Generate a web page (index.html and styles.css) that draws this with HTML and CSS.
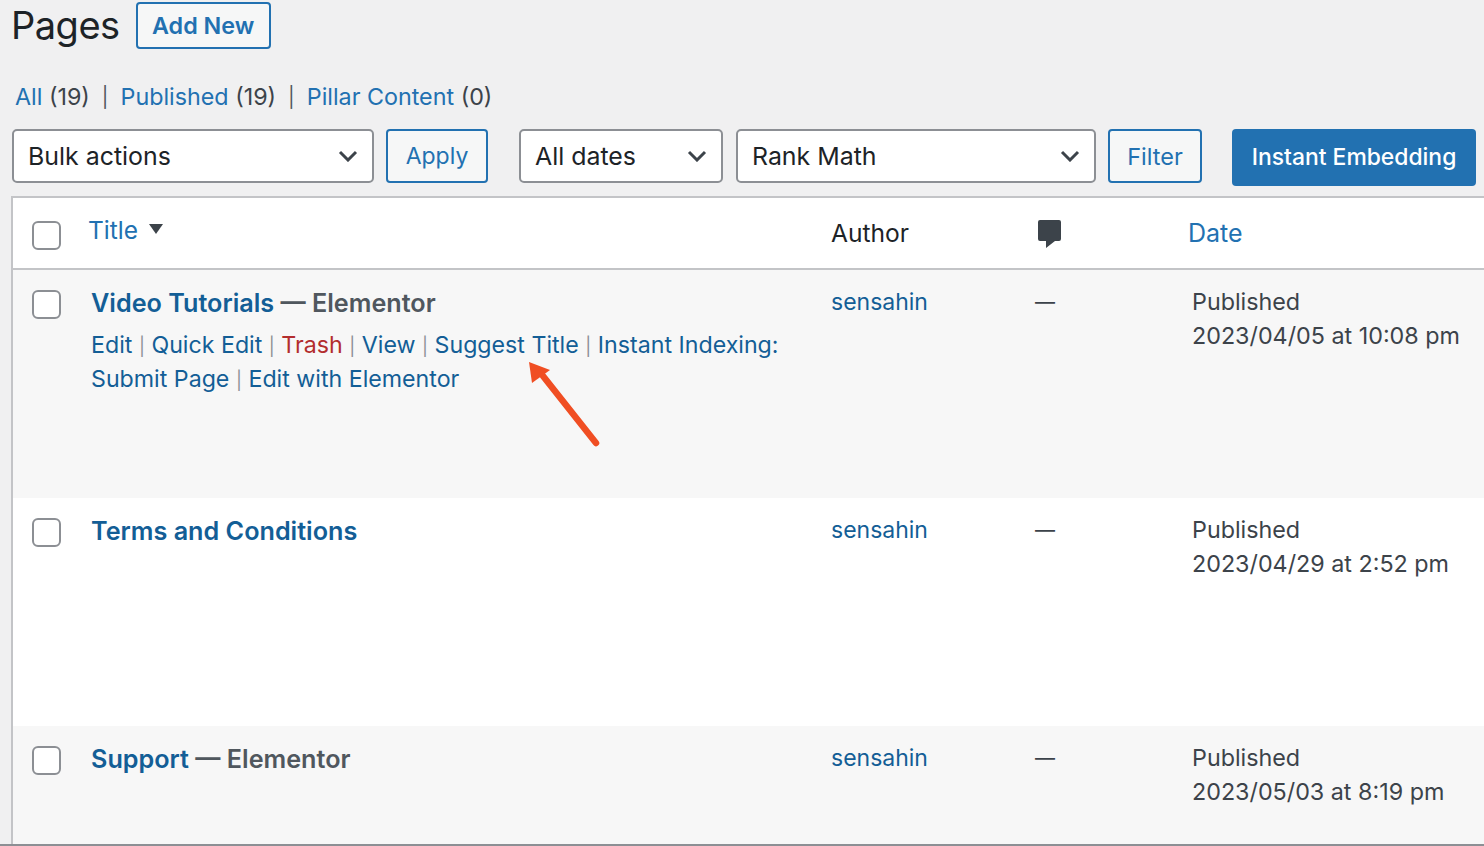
FILE: index.html
```html
<!DOCTYPE html>
<html lang="en">
<head>
  <meta charset="UTF-8" />
  <title>Pages</title>
  <link rel="stylesheet" href="styles.css">
</head>
<body>
  <div class="wrap">
    <div class="page-head">
      <h1>Pages</h1>
      <a class="btn add-new">Add New</a>
    </div>

    <ul class="subsub">
      <li><a>All</a> (19)</li>
      <li class="sep">|</li>
      <li><a>Published</a> (19)</li>
      <li class="sep">|</li>
      <li><a>Pillar Content</a> (0)</li>
    </ul>

    <div class="tablenav">
      <div class="select bulk">Bulk actions
        <svg class="chev" viewBox="0 0 20 12"><path d="M2 2l8 8 8-8"/></svg>
      </div>
      <a class="btn apply">Apply</a>
      <div class="select dates">All dates
        <svg class="chev" viewBox="0 0 20 12"><path d="M2 2l8 8 8-8"/></svg>
      </div>
      <div class="select seo">Rank Math
        <svg class="chev" viewBox="0 0 20 12"><path d="M2 2l8 8 8-8"/></svg>
      </div>
      <a class="btn filter">Filter</a>
      <a class="btn-primary">Instant Embedding</a>
    </div>

    <div class="table">
      <div class="row head">
        <span class="check"></span>
        <div class="col-title"><a>Title</a><span class="sort"></span></div>
        <div class="col-author">Author</div>
        <div class="col-comments">
          <svg class="bubble" viewBox="0 0 23 28"><path d="M2 0h19a2 2 0 0 1 2 2v17a2 2 0 0 1-2 2h-4l-9 7v-7H2a2 2 0 0 1-2-2V2a2 2 0 0 1 2-2z"/></svg>
        </div>
        <div class="col-date"><a>Date</a></div>
      </div>

      <div class="row alt">
        <span class="check"></span>
        <div class="col-title">
          <div class="page-title"><a>Video Tutorials</a> — Elementor</div>
          <div class="actions">
            <a>Edit</a> <i>|</i> <a>Quick Edit</a> <i>|</i> <a class="trash">Trash</a> <i>|</i> <a>View</a> <i>|</i> <a>Suggest Title</a> <i>|</i> <a>Instant Indexing:</a><br>
            <a>Submit Page</a> <i>|</i> <a>Edit with Elementor</a>
          </div>
        </div>
        <div class="col-author"><a>sensahin</a></div>
        <div class="col-comments">—</div>
        <div class="col-date">Published<br>2023/04/05 at 10:08 pm</div>
      </div>

      <div class="row">
        <span class="check"></span>
        <div class="col-title">
          <div class="page-title"><a>Terms and Conditions</a></div>
        </div>
        <div class="col-author"><a>sensahin</a></div>
        <div class="col-comments">—</div>
        <div class="col-date">Published<br>2023/04/29 at 2:52 pm</div>
      </div>

      <div class="row alt">
        <span class="check"></span>
        <div class="col-title">
          <div class="page-title"><a>Support</a> — Elementor</div>
        </div>
        <div class="col-author"><a>sensahin</a></div>
        <div class="col-comments">—</div>
        <div class="col-date">Published<br>2023/05/03 at 8:19 pm</div>
      </div>
    </div>
  </div>

  <!-- annotation arrow drawn over the screenshot -->
  <svg class="arrow" viewBox="0 0 80 95">
    <path class="arrow-line" d="M14 14L67 81"/>
    <path class="arrow-head" d="M0 0L3 21L21 8z"/>
  </svg>
</body>
</html>
```

FILE: styles.css
```css
html, body {
  margin: 0;
  height: 846px;
  overflow: hidden;
}

body {
  position: relative;
  background: #f0f0f1;
  color: #3c434a;
  font-family: Inter, "Noto Sans", sans-serif;
  font-size: 23.3px;
}

a {
  color: #2271b1;
  text-decoration: none;
}

.wrap {
  height: 844px;
  border-bottom: 2px solid #8c8f94;
  overflow: hidden;
}

.page-head {
  display: flex;
  align-items: center;
  gap: 16px;
  height: 50px;
  padding-left: 11px;
}

h1 {
  margin: 0;
  color: #1d2327;
  font-size: 38px;
  font-weight: 400;
  letter-spacing: -0.5px;
}

.btn {
  display: flex;
  align-items: center;
  justify-content: center;
  box-sizing: border-box;
  border: 2px solid #2271b1;
  border-radius: 4px;
  background: #f6f7f7;
}

.add-new {
  width: 135px;
  height: 47px;
  font-size: 23.3px;
  font-weight: 600;
}

.subsub {
  display: flex;
  gap: 12px;
  margin: 29px 0 0;
  padding: 0 0 0 15px;
  list-style: none;
  line-height: 36px;
}

.subsub .sep {
  color: #50575e;
  font-size: 20px;
}

.tablenav {
  display: flex;
  align-items: flex-start;
  margin: 14px 0 10px 12px;
  height: 57px;
}

.select {
  display: flex;
  align-items: center;
  justify-content: space-between;
  box-sizing: border-box;
  height: 54px;
  padding: 0 14px 0 14px;
  border: 2px solid #8c8f94;
  border-radius: 5px;
  background: #fff;
  color: #1d2327;
  font-size: 24.9px;
}

.chev {
  width: 20px;
  height: 12px;
  fill: none;
  stroke: #3c434a;
  stroke-width: 3;
}

.bulk {
  width: 362px;
}

.apply {
  width: 102px;
  height: 54px;
  margin-left: 12px;
  font-size: 23px;
}

.dates {
  width: 204px;
  margin-left: 31px;
}

.seo {
  width: 360px;
  margin-left: 13px;
}

.filter {
  width: 94px;
  height: 54px;
  margin-left: 12px;
  font-size: 23.5px;
}

.btn-primary {
  display: flex;
  align-items: center;
  justify-content: center;
  box-sizing: border-box;
  width: 244px;
  height: 57px;
  margin-left: 30px;
  padding-bottom: 2px;
  border-radius: 4px;
  background: #2271b1;
  color: #fff;
  font-size: 22.9px;
  font-weight: 500;
  white-space: nowrap;
}

.table {
  margin-left: 11px;
  border-top: 2px solid #c3c4c7;
  border-left: 2px solid #c3c4c7;
  background: #fff;
}

.row {
  display: grid;
  grid-template-columns: 48px 751px 204px 157px 1fr;
  height: 228px;
  padding-left: 19px;
  line-height: 34px;
  box-sizing: border-box;
}

.row.head {
  height: 72px;
  border-bottom: 2px solid #c3c4c7;
  align-items: center;
}

.row.alt {
  background: #f7f7f7;
}

.check {
  box-sizing: border-box;
  display: block;
  width: 29px;
  height: 29px;
  margin-top: 20px;
  border: 2px solid #8c8f94;
  border-radius: 6px;
  background: #fff;
}

.head .check {
  margin-top: 4px;
}

.col-title {
  padding: 16px 0 0 11px;
}

.head .col-title {
  display: flex;
  align-items: center;
  gap: 11px;
  padding: 0 0 6px 8px;
  font-size: 24.5px;
}

.sort {
  width: 0;
  height: 0;
  margin-bottom: 2px;
  border-left: 7px solid transparent;
  border-right: 7px solid transparent;
  border-top: 10px solid #3c434a;
}

.page-title {
  font-size: 25.2px;
  font-weight: 600;
  color: #50575e;
}

.page-title a {
  color: #135e96;
}

.actions {
  margin-top: 8px;
  font-size: 23.2px;
  white-space: nowrap;
}

.actions a {
  color: #135e96;
}

.actions .trash {
  color: #b32d2e;
}

.actions i {
  color: #8c8f94;
  font-style: normal;
  font-size: 18px;
  line-height: 0;
}

.col-author {
  padding-top: 15px;
  font-size: 23px;
}

.head .col-author {
  padding: 0;
  color: #1d2327;
  font-size: 24.6px;
}

.col-author a {
  color: #135e96;
}

.col-comments {
  padding-top: 15px;
  font-size: 20px;
}

.head .col-comments {
  padding: 1px 0 0 3px;
  line-height: 0;
}

.bubble {
  width: 23px;
  height: 28px;
  fill: #3c434a;
}

.col-date {
  padding-top: 15px;
  white-space: nowrap;
}

.head .col-date {
  padding: 0;
  margin-left: -4px;
  font-size: 25px;
}

.arrow {
  position: absolute;
  left: 529px;
  top: 362px;
  width: 80px;
  height: 95px;
}

.arrow-line {
  fill: none;
  stroke: #f04e23;
  stroke-width: 6.5;
  stroke-linecap: round;
}

.arrow-head {
  fill: #f04e23;
}
```
